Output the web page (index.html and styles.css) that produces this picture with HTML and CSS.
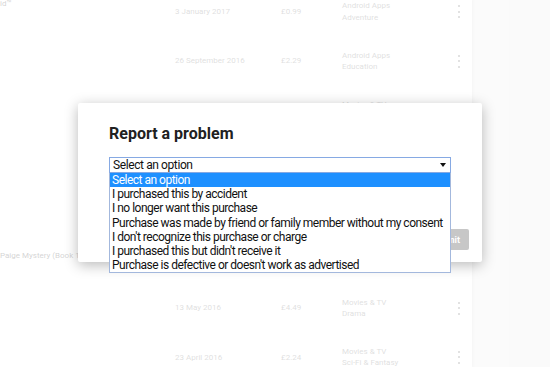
FILE: index.html
```html
<!DOCTYPE html>
<html lang="en">
<head>
    <meta charset="UTF-8">
    <meta name="viewport" content="width=device-width, initial-scale=1.0">
    <title>Order history - Report a problem</title>
    <link rel="stylesheet" href="styles.css">
</head>
<body>
    <!-- Purchase history behind the dialog -->
    <div class="page">
        <div class="purchases">
            <div class="list">
                <div class="row">
                    <div class="title title-top">id™</div>
                    <div class="date">3 January 2017</div>
                    <div class="price">£0.99</div>
                    <div class="category">Android Apps<br>Adventure</div>
                    <div class="more"><span></span><span></span><span></span></div>
                </div>
                <div class="row">
                    <div class="title"></div>
                    <div class="date">26 September 2016</div>
                    <div class="price">£2.29</div>
                    <div class="category">Android Apps<br>Education</div>
                    <div class="more"><span></span><span></span><span></span></div>
                </div>
                <!-- rows covered by the dialog -->
                <div class="row">
                    <div class="title"></div>
                    <div class="date"></div>
                    <div class="price"></div>
                    <div class="category category-top">Movies &amp; TV</div>
                    <div class="more"></div>
                </div>
                <div class="row"></div>
                <div class="row"></div>
                <div class="row">
                    <div class="title title-paige">Paige Mystery (Book 1)</div>
                </div>
                <div class="row">
                    <div class="title"></div>
                    <div class="date">13 May 2016</div>
                    <div class="price">£4.49</div>
                    <div class="category">Movies &amp; TV<br>Drama</div>
                    <div class="more"><span></span><span></span><span></span></div>
                </div>
                <div class="row">
                    <div class="title"></div>
                    <div class="date">23 April 2016</div>
                    <div class="price">£2.24</div>
                    <div class="category">Movies &amp; TV<br>Sci-Fi &amp; Fantasy</div>
                    <div class="more"><span></span><span></span><span></span></div>
                </div>
            </div>
        </div>
        <div class="side"></div>
    </div>

    <!-- Dim layer -->
    <div class="scrim"></div>

    <!-- Report dialog -->
    <div class="dialog">
        <h2 class="dialog-title">Report a problem</h2>
        <div class="picker">
            <div class="select">
                <span>Select an option</span>
                <span class="arrow"></span>
            </div>
            <ul class="options">
                <li class="option option-active">Select an option</li>
                <li class="option">I purchased this by accident</li>
                <li class="option">I no longer want this purchase</li>
                <li class="option">Purchase was made by friend or family member without my consent</li>
                <li class="option">I don't recognize this purchase or charge</li>
                <li class="option">I purchased this but didn't receive it</li>
                <li class="option">Purchase is defective or doesn't work as advertised</li>
            </ul>
        </div>
        <div class="actions">
            <button class="btn btn-submit">Submit</button>
        </div>
    </div>
</body>
</html>
```

FILE: styles.css
```css
/* Basic reset */
body, h2, ul {
    margin: 0;
    padding: 0;
}

body {
    width: 550px;
    height: 367px;
    overflow: hidden;
    position: relative;
    font-family: Roboto, "Liberation Sans", sans-serif;
    background-color: #ececec;
}

/* Page behind the dialog */
.page {
    display: flex;
    height: 367px;
}

.purchases {
    width: 472px;
    background-color: #fff;
    box-shadow: 1px 0 2px rgba(0, 0, 0, 0.1);
    overflow: hidden;
}

.list {
    margin-top: -13px;
}

.row {
    display: grid;
    grid-template-columns: 175px 106px 61px 116px 1fr;
    align-items: center;
    height: 49.4px;
    font-size: 8px;
    line-height: 11.5px;
    color: #7a7a7a;
}

.title {
    color: #4a4a4a;
    white-space: nowrap;
}

.title-top {
    align-self: start;
    padding-top: 11px;
}

.title-paige {
    padding-bottom: 5px;
}

/* first line of a two-line category, the rest is under the dialog */
.category-top {
    align-self: start;
    padding-top: 13px;
}

.more {
    display: flex;
    flex-direction: column;
    gap: 3.5px;
}

.more span {
    width: 2px;
    height: 2px;
    border-radius: 50%;
    background-color: #5f5f5f;
}

.side {
    flex: 1;
}

/* White veil over the page */
.scrim {
    position: absolute;
    top: 0;
    left: 0;
    right: 0;
    bottom: 0;
    background-color: rgba(255, 255, 255, 0.76);
}

/* Dialog */
.dialog {
    position: absolute;
    left: 78px;
    top: 103px;
    width: 404px;
    height: 159px;
    box-sizing: border-box;
    padding: 21px 13px 12px 31px;
    background-color: #fff;
    border-radius: 2px;
    box-shadow: 0 3px 14px rgba(0, 0, 0, 0.28);
}

.dialog-title {
    font-size: 16px;
    line-height: 20px;
    font-weight: 700;
    color: #212121;
}

.picker {
    position: relative;
    width: 342px;
    margin-top: 13px;
}

.select {
    display: flex;
    justify-content: space-between;
    align-items: center;
    height: 16px;
    box-sizing: border-box;
    padding: 0 3px;
    border: 1px solid #86a9e3;
    font-size: 12px;
    letter-spacing: -0.4px;
    color: #111;
}

.arrow {
    width: 0;
    height: 0;
    border-left: 3px solid transparent;
    border-right: 3px solid transparent;
    border-top: 4px solid #111;
    margin-right: 1px;
}

.options {
    position: absolute;
    top: 100%;
    left: 0;
    width: 342px;
    box-sizing: border-box;
    list-style: none;
    background-color: #fff;
    border: 1px solid #a3b8dd;
    border-top: none;
    z-index: 2;
}

.option {
    height: 14.2px;
    line-height: 14.2px;
    padding: 0 2px;
    font-size: 12px;
    letter-spacing: -0.5px;
    color: #111;
    white-space: nowrap;
}

.option-active {
    background-color: #1e90ff;
    color: #fff;
}

.actions {
    display: flex;
    justify-content: flex-end;
    margin-top: 56px;
}

.btn {
    height: 21px;
    padding: 0 9px;
    border: none;
    border-radius: 2px;
    font-family: inherit;
    font-size: 9px;
    font-weight: 700;
}

.btn-submit {
    width: 60px;
    text-align: right;
    background-color: #c7c7c7;
    color: #fff;
}
```
